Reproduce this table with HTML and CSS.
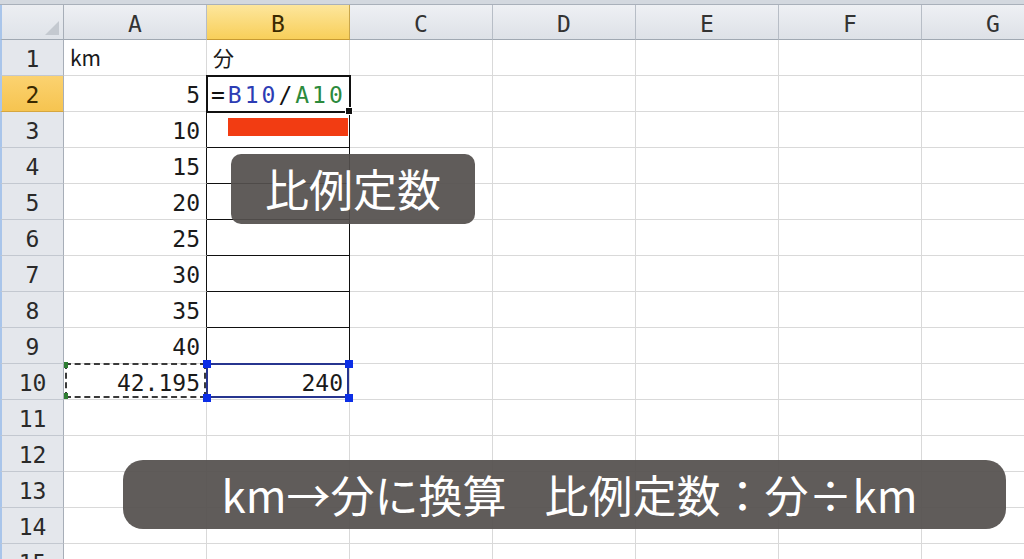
FILE: index.html
```html
<!DOCTYPE html>
<html lang="ja">
<head>
<meta charset="utf-8">
<link rel="stylesheet" href="styles.css">
</head>
<body>
<div class="sheet">
  <div class="topstrip"></div>
  <div class="row head">
    <div class="corner"><svg width="14" height="14" viewBox="0 0 14 14"><path d="M14 0 L14 14 L0 14 Z" fill="#c4c9d0"/></svg></div>
    <div class="ch">A</div><div class="ch sel">B</div><div class="ch">C</div><div class="ch">D</div><div class="ch">E</div><div class="ch">F</div><div class="ch">G</div>
  </div>
  <div class="row"><div class="rh">1</div><div class="c left">km</div><div class="c left bt">分</div><div class="c"></div><div class="c"></div><div class="c"></div><div class="c"></div><div class="c"></div></div>
  <div class="row"><div class="rh sel">2</div><div class="c ax">5</div><div class="c bx editing"><span class="f-eq">=</span><span class="f-b">B10</span><span class="f-eq">/</span><span class="f-a">A10</span></div><div class="c"></div><div class="c"></div><div class="c"></div><div class="c"></div><div class="c"></div></div>
  <div class="row"><div class="rh">3</div><div class="c ax">10</div><div class="c bx"><div class="redbar"></div></div><div class="c"></div><div class="c"></div><div class="c"></div><div class="c"></div><div class="c"></div></div>
  <div class="row"><div class="rh">4</div><div class="c ax">15</div><div class="c bx"></div><div class="c"></div><div class="c"></div><div class="c"></div><div class="c"></div><div class="c"></div></div>
  <div class="row"><div class="rh">5</div><div class="c ax">20</div><div class="c bx"></div><div class="c"></div><div class="c"></div><div class="c"></div><div class="c"></div><div class="c"></div></div>
  <div class="row"><div class="rh">6</div><div class="c ax">25</div><div class="c bx"></div><div class="c"></div><div class="c"></div><div class="c"></div><div class="c"></div><div class="c"></div></div>
  <div class="row"><div class="rh">7</div><div class="c ax">30</div><div class="c bx"></div><div class="c"></div><div class="c"></div><div class="c"></div><div class="c"></div><div class="c"></div></div>
  <div class="row"><div class="rh">8</div><div class="c ax">35</div><div class="c bx"></div><div class="c"></div><div class="c"></div><div class="c"></div><div class="c"></div><div class="c"></div></div>
  <div class="row"><div class="rh">9</div><div class="c ax">40</div><div class="c bx"></div><div class="c"></div><div class="c"></div><div class="c"></div><div class="c"></div><div class="c"></div></div>
  <div class="row"><div class="rh">10</div><div class="c ref-a">42.195<i class="gh tl"></i><i class="gh bl"></i></div><div class="c ref-b">240<i class="bh tl"></i><i class="bh tr"></i><i class="bh bl"></i><i class="bh br"></i></div><div class="c"></div><div class="c"></div><div class="c"></div><div class="c"></div><div class="c"></div></div>
  <div class="row"><div class="rh">11</div><div class="c"></div><div class="c"></div><div class="c"></div><div class="c"></div><div class="c"></div><div class="c"></div><div class="c"></div></div>
  <div class="row"><div class="rh">12</div><div class="c"></div><div class="c"></div><div class="c"></div><div class="c"></div><div class="c"></div><div class="c"></div><div class="c"></div></div>
  <div class="row"><div class="rh">13</div><div class="c"></div><div class="c"></div><div class="c"></div><div class="c"></div><div class="c"></div><div class="c"></div><div class="c"></div></div>
  <div class="row"><div class="rh">14</div><div class="c"></div><div class="c"></div><div class="c"></div><div class="c"></div><div class="c"></div><div class="c"></div><div class="c"></div></div>
  <div class="row"><div class="rh">15</div><div class="c"></div><div class="c"></div><div class="c"></div><div class="c"></div><div class="c"></div><div class="c"></div><div class="c"></div></div>

  <div class="caption small">比例定数</div>
  <div class="caption big">km→分に換算<span class="gap"></span>比例定数：分÷km</div>
</div>
</body>
</html>
```

FILE: styles.css
```css
* { box-sizing: border-box; }
html, body { margin: 0; padding: 0; background: #fff; }
body { width: 1024px; height: 559px; overflow: hidden; }

.sheet {
  position: relative;
  width: 1024px;
  height: 559px;
  overflow: hidden;
  font-family: "DejaVu Sans Mono", "Noto Sans CJK JP", monospace;
  color: #1a1a1a;
}

.topstrip {
  height: 5px;
  background: #d3d8df;
  border-bottom: 1px solid #a9b0ba;
}

.row {
  display: flex;
  height: 36px;
  width: 1065px;
}
.row.head { height: 35px; }

.corner {
  width: 64px;
  flex: none;
  background: linear-gradient(#eceef2, #dfe3e9);
  border-left: 2px solid #a9c5ea;
  border-right: 1px solid #a7aeb8;
  border-bottom: 1px solid #a0a8b2;
  display: flex;
  align-items: flex-end;
  justify-content: flex-end;
  padding: 0 4px 4px 0;
}

.ch {
  width: 143px;
  flex: none;
  background: linear-gradient(#eef0f4, #dde1e7);
  border-right: 1px solid #b7bdc6;
  border-bottom: 1px solid #a0a8b2;
  display: flex;
  align-items: center;
  justify-content: center;
  font-size: 23px;
  color: #333;
  padding-top: 4px;
}
.ch.sel {
  background: linear-gradient(#fde69c, #f8cf5a);
  border-right-color: #c9a64a;
  border-bottom-color: #c79a32;
  color: #3a2a00;
}

.rh {
  width: 64px;
  flex: none;
  background: #e4e7ec;
  border-left: 2px solid #a9c5ea;
  border-right: 1px solid #a7aeb8;
  border-bottom: 1px solid #c3c8d0;
  display: flex;
  align-items: center;
  justify-content: center;
  font-size: 23px;
  color: #2a2a2a;
  padding-top: 2px;
}
.rh.sel {
  background: linear-gradient(#fbd270, #f6c450);
  border-bottom-color: #d6a63e;
  color: #3a2a00;
}

.c {
  width: 143px;
  flex: none;
  position: relative;
  border-right: 1px solid #d9d9d9;
  border-bottom: 1px solid #d9d9d9;
  display: flex;
  align-items: center;
  justify-content: flex-end;
  padding: 3px 6px 0 6px;
  font-size: 23px;
  line-height: 1;
}
.c.left { justify-content: flex-start; font-family: "Noto Sans CJK JP", "DejaVu Sans", sans-serif; font-size: 21px; padding-left: 6px; padding-top: 0; }

.c.bt { border-bottom-color: #111; }
.c.ax { border-right-color: #111; }
.c.bx { border-right-color: #111; border-bottom-color: #111; }

.editing {
  justify-content: flex-start;
  padding-left: 4px;
  letter-spacing: 3px;
  z-index: 2;
  outline: 2px solid #111;
  outline-offset: -1px;
}
.editing::after {
  content: "";
  position: absolute;
  right: -4px;
  bottom: -4px;
  width: 6px;
  height: 6px;
  background: #111;
  border: 1px solid #fff;
}
.f-eq { color: #111; }
.f-b { color: #2c3cb4; }
.f-a { color: #2c8a3c; }

.redbar {
  position: absolute;
  left: 21px;
  top: 6px;
  width: 120px;
  height: 18px;
  background: #f23c12;
}

.ref-a::before {
  content: "";
  position: absolute;
  inset: -1px 0 1px 1px;
  border: 2px dashed #3a3a3a;
}
.ref-b {
  z-index: 2;
}
.ref-b::before {
  content: "";
  position: absolute;
  inset: -1px 0 1px -1px;
  border: 2px solid #27358f;
}
.gh, .bh {
  position: absolute;
  width: 7px;
  height: 7px;
}
.gh { background: #2e7d32; width: 4px; height: 6px; }
.bh { background: #0b2ee6; width: 8px; height: 8px; }
.gh.tl { left: 0; top: -2px; }
.gh.bl { left: 0; bottom: 0; }
.bh.tl { left: -4px; top: -4px; }
.bh.tr { right: -4px; top: -4px; }
.bh.bl { left: -4px; bottom: -3px; }
.bh.br { right: -4px; bottom: -3px; }

.caption {
  position: absolute;
  background: rgba(84, 80, 77, 0.93);
  color: #fff;
  font-family: "Noto Sans CJK JP", "Noto Sans", sans-serif;
  font-size: 44px;
  display: flex;
  align-items: center;
  justify-content: center;
  line-height: 1;
  z-index: 5;
}
.caption.small {
  left: 231px;
  top: 154px;
  width: 244px;
  height: 70px;
  border-radius: 10px;
  padding-bottom: 2px;
}
.caption.big {
  left: 123px;
  top: 460px;
  width: 883px;
  height: 69px;
  border-radius: 20px;
  padding-bottom: 2px;
  padding-left: 10px;
}
.gap {
  display: inline-block;
  width: 38px;
}
```
